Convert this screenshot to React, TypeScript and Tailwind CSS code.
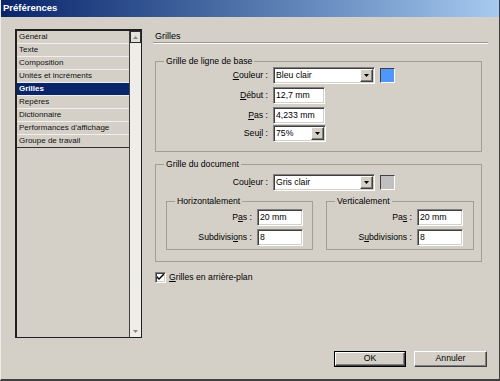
import React from "react";

const sunken =
  "border border-t-[#808080] border-l-[#808080] border-r-white border-b-white shadow-[inset_1px_1px_0_#404040,inset_-1px_-1px_0_#d4d0c8]";

function DropBtn() {
  return (
    <div className="ml-auto mr-[1px] h-[13px] w-[13px] shrink-0 bg-[#d4d0c8] border border-t-white border-l-white border-r-[#404040] border-b-[#404040] shadow-[inset_-1px_-1px_0_#808080] flex items-center justify-center">
      <svg width="5" height="3" viewBox="0 0 5 3">
        <path d="M0 0h5L2.5 3z" fill="#000" />
      </svg>
    </div>
  );
}

function Label({ text, u }: { text: string; u: number }) {
  return (
    <>
      {text.slice(0, u)}
      <span className="underline underline-offset-[1px]">{text[u]}</span>
      {text.slice(u + 1)}
    </>
  );
}

const items = [
  "Général",
  "Texte",
  "Composition",
  "Unités et incréments",
  "Grilles",
  "Repères",
  "Dictionnaire",
  "Performances d'affichage",
  "Groupe de travail",
];

export default function App() {
  return (
    <div className="w-[500px] h-[381px] bg-[#d4d0c8] flex flex-col border-l border-l-[#eeece8] border-r border-r-[#404040] border-b-2 border-b-[#404040] font-['Liberation_Sans',Arial,sans-serif] text-black overflow-hidden">
      <div className="h-[17px] shrink-0 bg-linear-to-r from-[#0a246a] to-[#a6caf0] flex items-center pl-[2px] text-white font-bold text-[9.5px]">
        Préférences
      </div>
      <div className="flex-1 flex pl-[14px] pt-[12px]">
        {/* list */}
        <div className="w-[127px] h-[309px] shrink-0 flex border-l-2 border-t-2 border-r border-b border-[#202020]">
          <div className="flex-1 flex flex-col">
            {items.map((t, i) => (
              <div
                key={t}
                className={
                  "h-[13px] leading-[12px] pl-[2px] text-[8px] border-b whitespace-nowrap " +
                  (i === items.length - 1 ? "border-b-[#303030] " : "border-b-[#f0efeb] ") +
                  (t === "Grilles" ? "bg-[#0a246a] text-white font-bold" : "text-[#111]")
                }
              >
                {t}
              </div>
            ))}
          </div>
          <div className="w-[12px] border-l border-l-[#404040] bg-[#eeede9] flex flex-col justify-between">
            <div className="h-[12px] border border-[#303030] bg-[#e4e2dc] flex items-center justify-center">
              <svg width="5" height="3" viewBox="0 0 5 3">
                <path d="M2.5 0L5 3H0z" fill="#8a877f" />
              </svg>
            </div>
            <div className="h-[11px] flex items-center justify-center">
              <svg width="5" height="3" viewBox="0 0 5 3">
                <path d="M0 0h5L2.5 3z" fill="#8a877f" />
              </svg>
            </div>
          </div>
        </div>

        {/* right panel */}
        <div className="ml-[11px] w-[335px] flex flex-col pb-[12px] text-[8.7px]">
          <div className="pt-[2px] h-[13px] leading-[10px] pl-[2px] text-[9px]">Grilles</div>
          <div className="h-[2px] border-t border-t-[#9a968e] border-b border-b-white" />

          <fieldset className="mt-[12px] ml-[2px] w-[327px] border border-[#a29e96] pb-[9px]">
            <legend className="ml-[8px] px-[2px] leading-[10px]">Grille de ligne de base</legend>
            <div className="flex items-center mt-[1px] h-[17px]">
              <span className="w-[112px] text-right whitespace-nowrap">
                <Label text="Couleur :" u={0} />
              </span>
              <div className={"ml-[5px] w-[102px] h-[17px] bg-white flex items-center pl-[2px] " + sunken}>
                Bleu clair
                <DropBtn />
              </div>
              <div className="ml-[5px] w-[15px] h-[15px] bg-[#4f97fb] border border-t-[#404040] border-l-[#404040] border-r-white border-b-white" />
            </div>
            <div className="flex items-center mt-[3px] h-[17px]">
              <span className="w-[112px] text-right">
                <Label text="Début :" u={0} />
              </span>
              <div className={"ml-[5px] w-[52px] h-[17px] bg-white flex items-center pl-[2px] " + sunken}>12,7 mm</div>
            </div>
            <div className="flex items-center mt-[3px] h-[17px]">
              <span className="w-[112px] text-right">
                <Label text="Pas :" u={0} />
              </span>
              <div className={"ml-[5px] w-[52px] h-[17px] bg-white flex items-center pl-[2px] " + sunken}>4,233 mm</div>
            </div>
            <div className="flex items-center mt-[1px] h-[17px]">
              <span className="w-[112px] text-right">
                <Label text="Seuil :" u={3} />
              </span>
              <div className={"ml-[5px] w-[53px] h-[17px] bg-white flex items-center pl-[2px] " + sunken}>
                75%
                <DropBtn />
              </div>
            </div>
          </fieldset>

          <fieldset className="mt-[7px] ml-[2px] w-[327px] border border-[#a29e96] pb-[11px]">
            <legend className="ml-[8px] px-[2px] leading-[10px]">Grille du document</legend>
            <div className="flex items-center mt-[5px] h-[17px]">
              <span className="w-[112px] text-right">
                <Label text="Couleur :" u={3} />
              </span>
              <div className={"ml-[5px] w-[102px] h-[17px] bg-white flex items-center pl-[2px] " + sunken}>
                Gris clair
                <DropBtn />
              </div>
              <div className="ml-[5px] w-[15px] h-[15px] bg-[#c0c0c0] border border-t-[#404040] border-l-[#404040] border-r-white border-b-white" />
            </div>
            <div className="flex mt-[5px]">
              <fieldset className="ml-[10px] w-[147px] border border-[#a29e96] pb-[3px] pr-[9px]">
                <legend className="ml-[8px] px-[2px] leading-[10px]">Horizontalement</legend>
                <div className="flex items-center justify-end mt-[3px] h-[17px]">
                  <span>
                    <Label text="Pas :" u={1} />
                  </span>
                  <div className={"ml-[5px] w-[46px] h-[17px] bg-white flex items-center pl-[2px] " + sunken}>20 mm</div>
                </div>
                <div className="flex items-center justify-end mt-[3px] h-[17px]">
                  <span>
                    <Label text="Subdivisions :" u={9} />
                  </span>
                  <div className={"ml-[5px] w-[46px] h-[17px] bg-white flex items-center pl-[2px] " + sunken}>8</div>
                </div>
              </fieldset>
              <fieldset className="ml-[13px] w-[148px] border border-[#a29e96] pb-[3px] pr-[10px]">
                <legend className="ml-[8px] px-[2px] leading-[10px]">Verticalement</legend>
                <div className="flex items-center justify-end mt-[3px] h-[17px]">
                  <span>
                    <Label text="Pas :" u={2} />
                  </span>
                  <div className={"ml-[5px] w-[46px] h-[17px] bg-white flex items-center pl-[2px] " + sunken}>20 mm</div>
                </div>
                <div className="flex items-center justify-end mt-[3px] h-[17px]">
                  <span>
                    <Label text="Subdivisions :" u={1} />
                  </span>
                  <div className={"ml-[5px] w-[46px] h-[17px] bg-white flex items-center pl-[2px] " + sunken}>8</div>
                </div>
              </fieldset>
            </div>
          </fieldset>

          <div className="mt-[10px] ml-[2px] h-[11px] flex items-center">
            <div className={"w-[11px] h-[11px] bg-white flex items-center justify-center " + sunken}>
              <svg width="7" height="7" viewBox="0 0 7 7">
                <path d="M0 2v2l2 2 5-5V-1L2 4z" fill="#000" />
              </svg>
            </div>
            <span className="ml-[3px] leading-[11px]">
              <Label text="Grilles en arrière-plan" u={0} />
            </span>
          </div>

          <div className="mt-auto flex justify-end pr-[1px]">
            <div className="w-[72px] h-[16px] border border-black flex">
              <div className="flex-1 flex items-center justify-center border border-t-white border-l-white border-r-[#404040] border-b-[#404040] shadow-[inset_-1px_-1px_0_#808080]">
                OK
              </div>
            </div>
            <div className="ml-[8px] w-[73px] h-[16px] flex items-center justify-center border border-t-white border-l-white border-r-[#404040] border-b-[#404040] shadow-[inset_-1px_-1px_0_#808080]">
              Annuler
            </div>
          </div>
        </div>
      </div>
    </div>
  );
}
